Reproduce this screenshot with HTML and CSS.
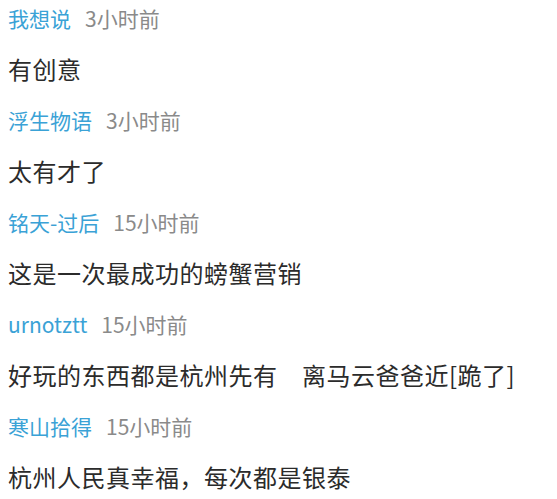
FILE: index.html
```html
<!DOCTYPE html>
<html lang="zh-CN">
  <head>
    <meta charset="UTF-8" />
    <meta name="viewport" content="width=device-width, initial-scale=1.0" />
    <title>评论</title>
    <link rel="stylesheet" href="styles.css">
  </head>
  <body>
    <div class="comments">
      <div class="comment">
        <div class="meta">
          <span class="name">我想说</span>
          <span class="time">3小时前</span>
        </div>
        <p class="text">有创意</p>
      </div>
      <div class="comment">
        <div class="meta">
          <span class="name">浮生物语</span>
          <span class="time">3小时前</span>
        </div>
        <p class="text">太有才了</p>
      </div>
      <div class="comment">
        <div class="meta">
          <span class="name">铭天-过后</span>
          <span class="time">15小时前</span>
        </div>
        <p class="text">这是一次最成功的螃蟹营销</p>
      </div>
      <div class="comment">
        <div class="meta">
          <span class="name">urnotztt</span>
          <span class="time">15小时前</span>
        </div>
        <p class="text">好玩的东西都是杭州先有　离马云爸爸近[跪了]</p>
      </div>
      <div class="comment">
        <div class="meta">
          <span class="name">寒山拾得</span>
          <span class="time">15小时前</span>
        </div>
        <p class="text">杭州人民真幸福，每次都是银泰</p>
      </div>
    </div>
  </body>
</html>
```

FILE: styles.css
```css
body {
  margin: 0;
  background-color: #fff;
  font-family: "Noto Sans CJK SC", "Open Sans", sans-serif;
}

.comments {
  padding-left: 8px;
}

.comment {
  display: flex;
  flex-direction: column;
}

.meta {
  display: flex;
  align-items: center;
  gap: 14px;
  height: 36px;
}

.name {
  color: #3aa2d6;
  font-size: 21px;
}

.time {
  color: #8a8a8a;
  font-size: 21px;
}

.text {
  margin: 0;
  color: #2b2b2b;
  font-size: 24px;
  letter-spacing: 0.5px;
  line-height: 66px;
}
```
